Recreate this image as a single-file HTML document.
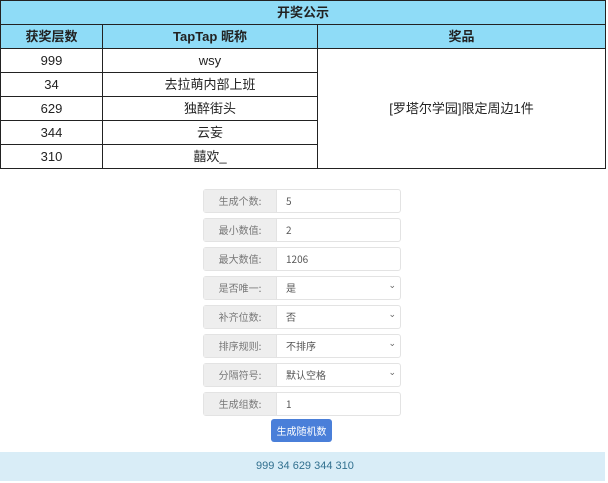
<!DOCTYPE html>
<html><head><meta charset="utf-8"><style>
body{margin:0;width:608px;height:483px;background:#fff;font-family:"Liberation Sans","Noto Sans CJK SC",sans-serif;position:relative;overflow:hidden}
table{position:absolute;left:0;top:0;width:606px;border-collapse:collapse;font-size:13px;color:#222}
td,th{border:1px solid #222;height:23px;padding:0;text-align:center;line-height:14px}
th{background:#8fdcf7;font-weight:bold;font-size:13px}
.row{position:absolute;left:203px;width:198px;height:24px;border:1px solid #e3e3e3;border-radius:3px;font-size:10px;color:#555;display:flex;box-sizing:border-box;font-family:"Noto Sans CJK SC",sans-serif;line-height:22px}
.row .l{width:72px;background:#eee;color:#777;border-right:1px solid #e3e3e3;text-align:center}
.row .v{flex:1;padding-left:9px;position:relative}
.row .v.s:after{content:"⌄";position:absolute;right:4px;top:-3px;font-size:9px;color:#666}
.btn{position:absolute;left:271px;top:419px;width:61px;height:23px;background:#4a7fd9;border-radius:3px;color:#fff;font-size:10px;text-align:center;line-height:23px;font-family:"Noto Sans CJK SC",sans-serif}
.bar{position:absolute;left:0;top:452px;width:605px;height:29px;background:#d9edf7;color:#31708f;font-size:11px;line-height:29px;padding-left:256px;box-sizing:border-box}
</style></head><body>
<table>
<tr><th colspan="3">开奖公示</th></tr>
<tr><th style="width:101px">获奖层数</th><th style="width:214px">TapTap 昵称</th><th>奖品</th></tr>
<tr><td>999</td><td>wsy</td><td rowspan="5">[罗塔尔学园]限定周边1件</td></tr>
<tr><td>34</td><td>去拉萌内部上班</td></tr>
<tr><td>629</td><td>独醉街头</td></tr>
<tr><td>344</td><td>云妄</td></tr>
<tr><td>310</td><td>囍欢_</td></tr>
</table>
<div class="row" style="top:189px"><div class="l">生成个数:</div><div class="v">5</div></div>
<div class="row" style="top:218px"><div class="l">最小数值:</div><div class="v">2</div></div>
<div class="row" style="top:247px"><div class="l">最大数值:</div><div class="v">1206</div></div>
<div class="row" style="top:276px"><div class="l">是否唯一:</div><div class="v s">是</div></div>
<div class="row" style="top:305px"><div class="l">补齐位数:</div><div class="v s">否</div></div>
<div class="row" style="top:334px"><div class="l">排序规则:</div><div class="v s">不排序</div></div>
<div class="row" style="top:363px"><div class="l">分隔符号:</div><div class="v s">默认空格</div></div>
<div class="row" style="top:392px"><div class="l">生成组数:</div><div class="v">1</div></div>
<div class="btn">生成随机数</div>
<div class="bar">999 34 629 344 310</div>
</body></html>
